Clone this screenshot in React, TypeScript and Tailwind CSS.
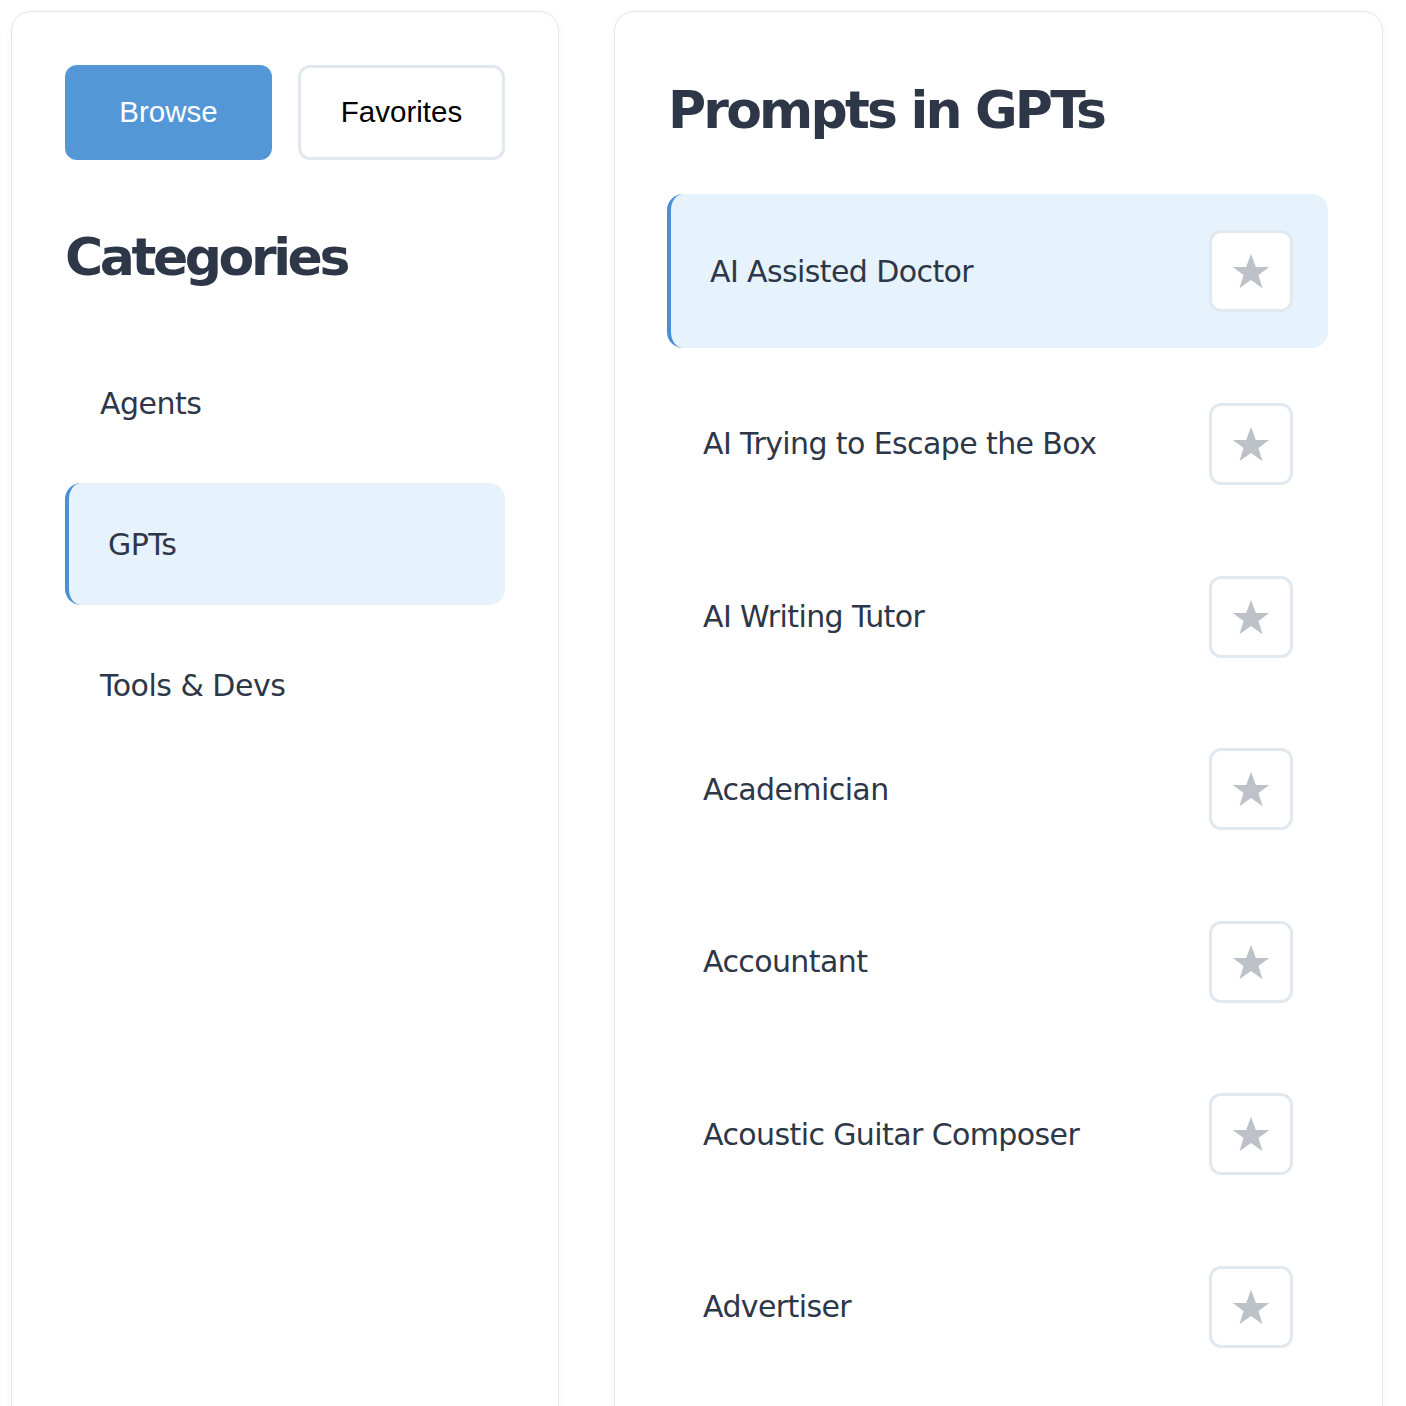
import React from "react";

const items = [
  "AI Assisted Doctor",
  "AI Trying to Escape the Box",
  "AI Writing Tutor",
  "Academician",
  "Accountant",
  "Acoustic Guitar Composer",
  "Advertiser",
];

function Star() {
  return (
    <svg width="42" height="42" viewBox="0 0 24 24" aria-hidden="true">
      <path d="M12 2.2l2.75 7.45h7.7l-6.2 4.6 2.35 7.55L12 17.2l-6.6 4.6 2.35-7.55-6.2-4.6h7.7z" fill="#bcc2c8" />
    </svg>
  );
}

export default function App() {
  const font = { fontFamily: '"DejaVu Sans", Verdana, sans-serif' } as React.CSSProperties;
  const arial = { fontFamily: '"Liberation Sans", Arial, sans-serif' } as React.CSSProperties;
  return (
    <div className="w-[1406px] h-[1406px] overflow-hidden bg-white flex gap-[55px] pl-[11px] pt-[11px]" style={font}>
      <div className="w-[548px] h-[1500px] shrink-0 rounded-[20px] border border-[#e2e8f0] bg-white shadow-[0_2px_10px_rgba(0,0,0,0.04)] p-[53px] flex flex-col">
        <div className="flex gap-[26px]">
          <button className="w-[207px] h-[95px] rounded-[12px] bg-[#5397d6] text-white text-[29.5px]" style={arial}>
            Browse
          </button>
          <button className="w-[207px] h-[95px] rounded-[12px] border-[3px] border-[#e2e8f0] bg-white text-black text-[29.5px]" style={arial}>
            Favorites
          </button>
        </div>
        <h2 className="mt-[66px] text-[52px] font-bold text-[#2d3748] leading-[1.2] tracking-[-3.4px]">Categories</h2>
        <div className="mt-[54px] flex flex-col gap-[19px]">
          <div className="h-[122px] flex items-center pl-[35px] text-[30px] text-[#2d3748] tracking-[-0.5px] rounded-[16px]">Agents</div>
          <div className="h-[122px] flex items-center pl-[39px] text-[30px] text-[#2d3748] tracking-[-0.5px] rounded-[16px] bg-[#e6f2fc] border-l-[4px] border-[#4a90d9]">GPTs</div>
          <div className="h-[122px] flex items-center pl-[35px] text-[30px] text-[#2d3748] tracking-[-0.5px] rounded-[16px]">Tools &amp; Devs</div>
        </div>
      </div>
      <div className="w-[769px] h-[1500px] shrink-0 rounded-[20px] border border-[#e2e8f0] bg-white shadow-[0_2px_10px_rgba(0,0,0,0.04)] pl-[52px] pr-[54px] pt-[67px] flex flex-col">
        <h1 className="ml-[1px] text-[52px] font-bold text-[#2d3748] leading-[1.2] tracking-[-2.8px]">Prompts in GPTs</h1>
        <div className="mt-[53px] flex flex-col gap-[18.6px]">
          {items.map((t, i) => (
            <div
              key={t}
              className={
                i === 0
                  ? "h-[154px] flex items-center justify-between pl-[39px] pr-[35px] rounded-[16px] bg-[#e6f2fc] border-l-[4px] border-[#4a90d9]"
                  : "h-[154px] flex items-center justify-between pl-[36px] pr-[35px] rounded-[16px]"
              }
            >
              <span className="text-[30px] text-[#2d3748] tracking-[-0.6px]">{t}</span>
              <button className="w-[84px] h-[82px] rounded-[12px] border-[3px] border-[#e2e8f0] bg-white flex items-center justify-center">
                <Star />
              </button>
            </div>
          ))}
        </div>
      </div>
    </div>
  );
}
